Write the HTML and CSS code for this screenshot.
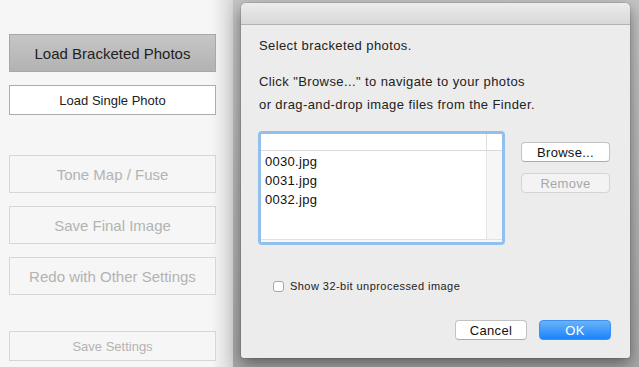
FILE: index.html
```html
<!DOCTYPE html>
<html>
<head>
  <title>Bracketed Photos</title>
  <link rel="stylesheet" href="styles.css">
</head>
<body>

<div class="app">
  <div class="sidebar">
    <button class="side-btn big pressed">Load Bracketed Photos</button>
    <button class="side-btn small active">Load Single Photo</button>
    <button class="side-btn big off gap-top">Tone Map / Fuse</button>
    <button class="side-btn big off">Save Final Image</button>
    <button class="side-btn big off">Redo with Other Settings</button>
    <button class="side-btn small off gap-bottom">Save Settings</button>
  </div>

  <div class="stage">
    <div class="dialog">
      <div class="titlebar"></div>
      <div class="dialog-body">
        <p class="lead">Select bracketed photos.</p>
        <p class="hint">Click "Browse..." to navigate to your photos<br>or drag-and-drop image files from the Finder.</p>

        <div class="picker">
          <div class="file-list">
            <div class="list-inner">
              <div class="list-head">
                <span class="col-main"></span>
                <span class="col-side"></span>
              </div>
              <div class="list-rows">
                <div class="col-main">
                  <div class="row">0030.jpg</div>
                  <div class="row">0031.jpg</div>
                  <div class="row">0032.jpg</div>
                </div>
                <div class="col-side"></div>
              </div>
              <div class="list-foot"></div>
            </div>
          </div>
          <div class="picker-buttons">
            <button class="mac-btn">Browse...</button>
            <button class="mac-btn disabled">Remove</button>
          </div>
        </div>

        <label class="check">
          <span class="box"></span>
          Show 32-bit unprocessed image
        </label>

        <div class="footer">
          <button class="mac-btn wide">Cancel</button>
          <button class="mac-btn wide primary">OK</button>
        </div>
      </div>
    </div>
  </div>
</div>

</body>
</html>
```

FILE: styles.css
```css
body {
  margin: 0;
  font-family: "Liberation Sans", Arial, sans-serif;
  color: #222;
  overflow: hidden;
}

.app {
  display: flex;
  width: 639px;
  height: 367px;
}

.sidebar {
  width: 233px;
  flex-shrink: 0;
  display: flex;
  flex-direction: column;
  padding: 34px 0 0 9px;
  box-sizing: border-box;
  background: linear-gradient(to right, #f6f6f6 0, #f6f6f6 212px, #d6d6d6 233px);
}

.side-btn {
  width: 207px;
  flex-shrink: 0;
  margin: 0 0 13px 0;
  border: 1px solid #acacac;
  background: #fff;
  font-family: "Liberation Sans", Arial, sans-serif;
  color: #222;
  padding: 0;
}

.side-btn.big {
  height: 38px;
  font-size: 15px;
}

.side-btn.small {
  height: 30px;
  font-size: 13px;
}

.side-btn.pressed {
  background: linear-gradient(#c6c6c6, #b2b2b2);
  border-color: #a8a8a8;
}

.side-btn.off {
  background: #f6f6f6;
  border-color: #d6d6d6;
  color: #b3b3b3;
}

.side-btn.gap-top {
  margin-top: 27px;
}

.side-btn.gap-bottom {
  margin-top: 23px;
}

.stage {
  flex: 1;
  background: linear-gradient(#c4c4c4, #a8a8a8);
  padding: 3px 0 0 8px;
}

.dialog {
  width: 389px;
  height: 355px;
  background: #ececec;
  border-radius: 5px 5px 3px 3px;
  box-shadow: 0 6px 16px rgba(0, 0, 0, 0.45), 0 0 0 1px rgba(0, 0, 0, 0.08);
  display: flex;
  flex-direction: column;
}

.titlebar {
  height: 21px;
  border-radius: 5px 5px 0 0;
  background: linear-gradient(#ececec, #d8d8d8);
  border-bottom: 1px solid #b2b2b2;
}

.dialog-body {
  padding: 13px 19px 0 18px;
  font-size: 13px;
  letter-spacing: 0.4px;
  flex: 1;
  display: flex;
  flex-direction: column;
}

.lead {
  margin: 0;
  line-height: 16px;
}

.hint {
  margin: 16px 0 0 0;
  line-height: 23px;
}

.picker {
  display: flex;
  margin-top: 15px;
  margin-left: -1px;
}

.file-list {
  width: 247px;
  height: 114px;
  box-sizing: border-box;
  border: 3px solid #93bfec;
  border-radius: 4px;
  background: #fff;
}

.list-inner {
  height: 100%;
  display: flex;
  flex-direction: column;
}

.list-head {
  height: 16px;
  display: flex;
  border-bottom: 1px solid #dadada;
}

.list-head .col-main {
  flex: 1;
  border-right: 1px solid #dedede;
}

.list-head .col-side {
  width: 15px;
}

.list-rows {
  flex: 1;
  display: flex;
}

.list-rows .col-main {
  flex: 1;
  border-right: 1px solid #e4e4e4;
}

.list-rows .col-side {
  width: 15px;
  background: #f6f6f6;
}

.row {
  height: 19px;
  line-height: 21px;
  padding-left: 4px;
  font-size: 13px;
  letter-spacing: 0.3px;
  color: #111;
}

.list-foot {
  height: 2px;
  border-top: 1px solid #e2e2e2;
  background: #f6f6f6;
}

.picker-buttons {
  display: flex;
  flex-direction: column;
  gap: 11px;
  margin: 11px 0 0 16px;
}

.mac-btn {
  width: 89px;
  height: 20px;
  padding: 0;
  background: #fff;
  border: 1px solid #c2c2c2;
  border-bottom-color: #acacac;
  border-radius: 4px;
  font-family: "Liberation Sans", Arial, sans-serif;
  font-size: 13px;
  letter-spacing: 0.3px;
  color: #111;
}

.mac-btn.disabled {
  background: #f3f3f3;
  border-color: #d4d4d4;
  color: #a8a8a8;
}

.mac-btn.wide {
  width: 72px;
}

.mac-btn.primary {
  background: linear-gradient(#6ab2fb, #1984fb);
  border-color: #3c8ff3;
  color: #fff;
}

.check {
  display: flex;
  align-items: center;
  margin: 35px 0 0 14px;
  font-size: 11px;
  letter-spacing: 0.45px;
  color: #222;
}

.box {
  width: 11px;
  height: 11px;
  box-sizing: border-box;
  border: 1px solid #a8a8a8;
  border-radius: 3px;
  background: #fff;
  margin-right: 6px;
}

.footer {
  display: flex;
  justify-content: flex-end;
  gap: 12px;
  margin-top: 28px;
}
```
